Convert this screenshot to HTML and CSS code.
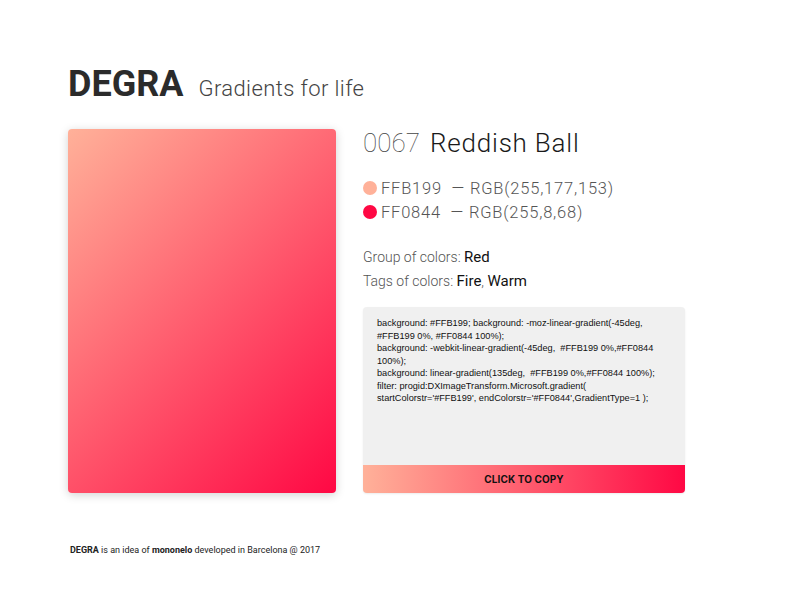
FILE: index.html
```html
<!DOCTYPE html>
<html>
<head>
<meta charset="utf-8">
<link rel="stylesheet" href="styles.css">
</head>
<body>
<div class="page">
  <header class="header">
    <h1 class="logo">DEGRA</h1>
    <span class="tagline">Gradients for life</span>
  </header>
  <main class="main">
    <div class="swatch"></div>
    <section class="info">
      <h2 class="title"><span class="num">0067</span><span class="name">Reddish Ball</span></h2>
      <ul class="colors">
        <li class="color"><span class="dot dot-a"></span>FFB199 &nbsp;— RGB(255,177,153)</li>
        <li class="color"><span class="dot dot-b"></span>FF0844 &nbsp;— RGB(255,8,68)</li>
      </ul>
      <p class="meta">Group of colors: <b>Red</b></p>
      <p class="meta">Tags of colors: <b>Fire</b>, <b>Warm</b></p>
      <div class="code-box">
        <div class="code">background: #FFB199; background: -moz-linear-gradient(-45deg,<br>#FFB199 0%, #FF0844 100%);<br>background: -webkit-linear-gradient(-45deg,&nbsp; #FFB199 0%,#FF0844<br>100%);<br>background: linear-gradient(135deg,&nbsp; #FFB199 0%,#FF0844 100%);<br>filter: progid:DXImageTransform.Microsoft.gradient(<br>startColorstr='#FFB199', endColorstr='#FF0844',GradientType=1 );</div>
        <button class="copy">CLICK TO COPY</button>
      </div>
    </section>
  </main>
  <footer class="footer"><b>DEGRA</b> is an idea of <b>mononelo</b> developed in Barcelona @ 2017</footer>
</div>
</body>
</html>
```

FILE: styles.css
```css
html, body {
  margin: 0;
  padding: 0;
  background: #fff;
}
body {
  font-family: Roboto, "Liberation Sans", sans-serif;
  color: #333;
}
.page {
  padding: 66px 0 0 68px;
}
.header {
  display: flex;
  align-items: baseline;
  gap: 15px;
}
.logo {
  margin: 0;
  font-size: 36px;
  line-height: 1;
  font-weight: 700;
  color: #2b2b2b;
}
.tagline {
  font-size: 22px;
  font-weight: 300;
  letter-spacing: 0.4px;
  color: #444;
}
.main {
  display: flex;
  gap: 27px;
  margin-top: 27px;
}
.swatch {
  width: 268px;
  height: 364px;
  border-radius: 4px;
  background: linear-gradient(135deg, #FFB199 0%, #FF0844 100%);
  box-shadow: 0 2px 10px rgba(0,0,0,0.18);
  flex: none;
}
.info {
  width: 322px;
}
.title {
  margin: 0;
  font-size: 26px;
  line-height: 28px;
  font-weight: 300;
  color: #1a1a1a;
  display: flex;
  gap: 10px;
}
.num {
  font-weight: 100;
  color: #444;
}
.name {
  letter-spacing: 0.8px;
}
.colors {
  list-style: none;
  margin: 19px 0 0;
  padding: 0;
}
.color {
  display: flex;
  align-items: center;
  gap: 4px;
  height: 24px;
  font-size: 16.5px;
  font-weight: 300;
  letter-spacing: 0.8px;
  color: #555;
  white-space: pre;
}
.dot {
  width: 14px;
  height: 14px;
  border-radius: 50%;
  flex: none;
}
.dot-a { background: #FFB199; }
.dot-b { background: #FF0844; }
.meta {
  margin: 0;
  height: 24px;
  line-height: 24px;
  font-size: 14px;
  font-weight: 300;
  color: #555;
}
.colors + .meta {
  margin-top: 21px;
}
.meta b {
  font-weight: 400;
  font-size: 15px;
  color: #111;
}
.code-box {
  margin-top: 14px;
  border-radius: 4px;
  overflow: hidden;
  background: #f0f0f0;
  box-shadow: 0 1px 2px rgba(0,0,0,0.08);
}
.code {
  height: 136px;
  padding: 10px 10px 12px 14px;
  font-family: "Liberation Sans", Arial, sans-serif;
  font-size: 9.2px;
  line-height: 12.5px;
  color: #111;
  white-space: nowrap;
  overflow: hidden;
}
.copy {
  display: block;
  width: 100%;
  height: 28px;
  border: 0;
  margin: 0;
  padding: 0;
  background: linear-gradient(90deg, #FFB199 0%, #FF0844 100%);
  font-family: Inter, Roboto, sans-serif;
  font-size: 10px;
  font-weight: 700;
  color: #111;
  letter-spacing: 0.1px;
}
.footer {
  margin-top: 52px;
  font-family: Roboto, sans-serif;
  font-size: 9px;
  color: #222;
  padding-left: 2px;
}
.footer b { font-weight: 700; }
```
